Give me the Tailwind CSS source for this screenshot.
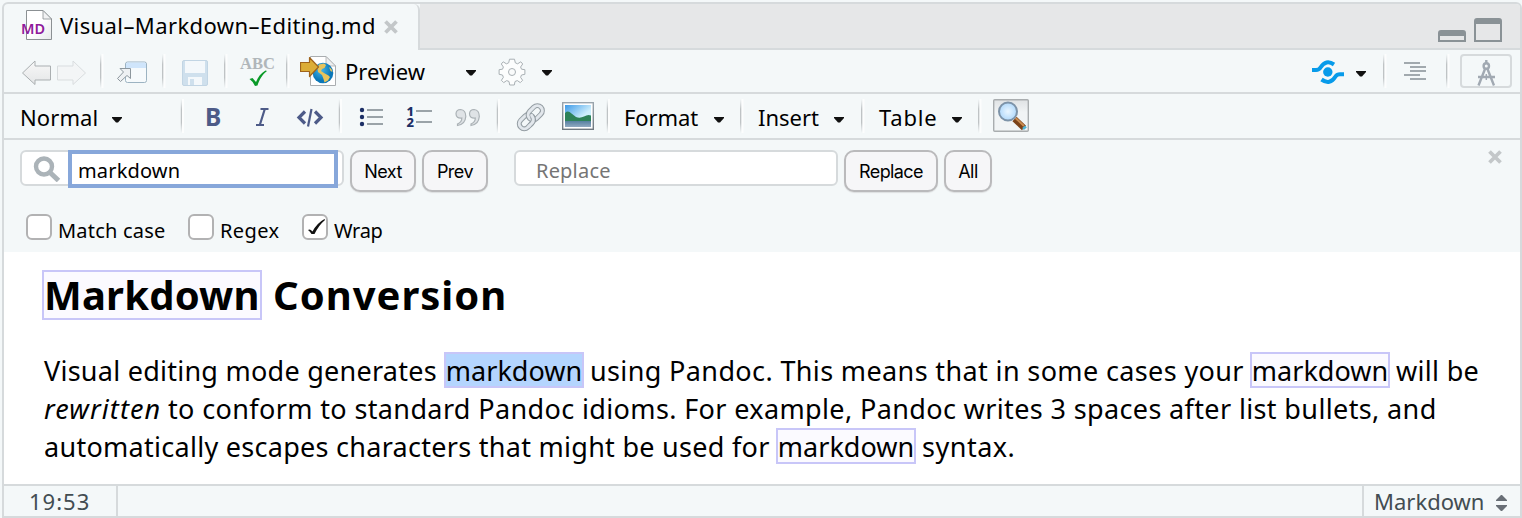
<!DOCTYPE html>
<html lang="en">
<head>
<meta charset="utf-8">
<title>Visual-Markdown-Editing.md</title>
<script src="https://cdn.jsdelivr.net/npm/@tailwindcss/browser@4"></script>
</head>
<body class="w-[1522px] h-[518px] overflow-hidden bg-[#f4f8f9] pt-0.5 pl-0.5 font-['Noto_Sans',sans-serif] text-black">
<svg class="absolute w-0 h-0">
  <defs>
    <linearGradient id="sepg" x1="0" y1="0" x2="0" y2="1"><stop offset="0" stop-color="#c4c8ca" stop-opacity="0"/><stop offset=".3" stop-color="#bfc3c5"/><stop offset=".7" stop-color="#bfc3c5"/><stop offset="1" stop-color="#c4c8ca" stop-opacity="0"/></linearGradient>
    <symbol id="sep" viewBox="0 0 4 34"><rect width="1.500" height="34" fill="url(#sepg)"/><rect x="1.500" width="2" height="34" fill="#fff" opacity=".7"/></symbol>
    <symbol id="caret" viewBox="0 0 10 6"><path d="M0 0H10V1L6 5.400H4L0 1Z" fill="#111"/></symbol>
    <symbol id="x" viewBox="0 0 14 14"><path d="M1.500 1.500L12.500 12.500M12.500 1.500L1.500 12.500" stroke="#c3c7c9" stroke-width="3.800"/></symbol>
  </defs>
</svg>
<div class="w-[1520px] h-[516px] flex flex-col border-2 border-[#d6dadc] rounded-t-md">
  <!-- tab strip -->
  <div class="h-[46px] flex shrink-0">
    <div class="w-[416px] h-[46px] flex shrink-0 border-r-2 border-[#d6dadc] rounded-tr-md">
      <svg class="ml-[17px] w-[32px] h-[46px] shrink-0" viewBox="21 4 32 46">
        <defs><linearGradient id="pg" x1="0" y1="0" x2="1" y2="1"><stop offset=".5" stop-color="#fff"/><stop offset="1" stop-color="#e6e9ea"/></linearGradient></defs>
        <path d="M26.500 10.500H43L51.500 19V39.500H26.500Z" fill="url(#pg)" stroke="#8b9093"/><path d="M43 10.500V19H51.500Z" fill="#f1f2f3" stroke="#8b9093" stroke-width=".8"/>
        <text x="21" y="34" font-family="Noto Sans" font-size="15" font-weight="600" fill="#8f1a9b" textLength="24" lengthAdjust="spacingAndGlyphs">MD</text>
      </svg>
      <div class="ml-[7px] w-[316px] text-[22px] leading-[42px] whitespace-nowrap tracking-[0.4px]">Visual–Markdown–Editing.md</div>
      <svg class="ml-[8px] mt-[16px] w-[14px] h-[14px] shrink-0"><use href="#x"/></svg>
    </div>
    <div class="flex-1 bg-[#e6e7e8] border-b-2 border-[#d6dadc] flex justify-end rounded-tr-sm">
      <svg class="w-[66px] h-[44px] mr-[16px]" viewBox="1438 4 66 44"><g fill="#8a9296"><path fill-rule="evenodd" d="M1438 42V33Q1438 30 1441 30H1463Q1466 30 1466 33V42ZM1440 36V40H1464V36Z"/><path fill-rule="evenodd" d="M1474 42V21Q1474 18 1477 18H1499Q1502 18 1502 21V42ZM1476 24V40H1500V24Z"/></g></svg>
    </div>
  </div>
  <!-- document toolbar -->
  <div class="h-[44px] flex shrink-0 border-b-2 border-[#d6dadc]">
    <svg class="ml-[16px] w-[280px] h-[42px] shrink-0" viewBox="20 50 280 42">
      <defs><linearGradient id="arr" x1="0" y1="0" x2="0" y2="1"><stop offset="0" stop-color="#f8f8f8"/><stop offset="1" stop-color="#e4e6e7"/></linearGradient></defs>
      <path d="M22.500 73L35 61V66H50.500V80H35V84.500Z" fill="url(#arr)" stroke="#aaafb1" stroke-linejoin="round"/>
      <path d="M85.500 73L73 61V66H57.500V80H73V84.500Z" fill="#f3f5f6" stroke="#d9dddf" stroke-linejoin="round"/>
      <use href="#sep" x="100" y="54" width="4" height="34"/><use href="#sep" x="162" y="54" width="4" height="34"/><use href="#sep" x="224" y="54" width="4" height="34"/><use href="#sep" x="286" y="54" width="4" height="34"/>
      <rect x="125.500" y="62" width="21" height="20.500" rx="2" fill="#f6fafc" stroke="#9cb3c2"/><path d="M126 68V64Q126 62.500 127.500 62.500H144.500Q146 62.500 146 64V68Z" fill="#cfe5fb"/>
      <path d="M120 68.500H130.500V78.500L127 75.500L120.500 81.500L117.500 78.500L123.500 72Z" fill="#eef1f3" stroke="#8d979e" stroke-linejoin="round"/>
      <rect x="182.500" y="60.500" width="25" height="25" rx="1.500" fill="#cfe0ed" stroke="#c2d5e4"/><path d="M185 61H205V73H185ZM188 77H202V85H188Z" fill="#f4f8fb"/><rect x="190" y="79" width="4" height="6" fill="#cfe0ed"/>
      <text x="240" y="69" font-family="Liberation Serif" font-size="17" font-weight="700" fill="#b0b6ba" textLength="35" lengthAdjust="spacingAndGlyphs">ABC</text>
      <path d="M249.500 79L252.500 78L256 82C258 77 261 73 265.500 70.500L267 71C262 75 259.500 79.500 257.500 85.500L255 86Q252.500 81 249.500 79Z" fill="#0a9a28"/>
    </svg>
    <svg class="w-[37px] h-[42px] shrink-0" viewBox="300 50 37 42">
      <defs><radialGradient id="gl" cx=".4" cy=".35"><stop offset="0" stop-color="#45b8ea"/><stop offset="1" stop-color="#0b77b8"/></radialGradient></defs>
      <path d="M310.500 56.500H326L335.500 66V85.500H310.500Z" fill="#fff" stroke="#a9adb0"/><path d="M326 56.500V66H335.500Z" fill="#eee" stroke="#a9adb0" stroke-width=".8"/>
      <circle cx="323" cy="73" r="10.300" fill="url(#gl)"/><path d="M319 64.500L324 63.500L326 65L324.500 68L322 69L321 71L324 73L328.500 75.500L330 77L328 80.500L324.500 82.500L323.500 79L322 75L318 72L317.500 68ZM329 67L331.500 69L332.500 72L330.500 71Z" fill="#e8c35b"/>
      <path d="M300.500 62.500H309.500V57.500L318.500 67L309.500 76.500V71.500H300.500Z" fill="#dcad37" stroke="#a0641c" stroke-width="1.200" stroke-linejoin="round"/>
    </svg>
    <div class="ml-[8px] w-[121px] text-[22px] leading-[42px] whitespace-nowrap">Preview</div>
    <svg class="w-[10px] h-[6px] mt-[20px] shrink-0"><use href="#caret"/></svg>
    <svg class="ml-[22px] mt-[8px] w-[28px] h-[28px] shrink-0" viewBox="-14 -14 28 28">
      <path fill="#fcfdfd" stroke="#a9b0b4" stroke-linejoin="round" d="M-2.500-12.800H2.500L3.300-9.200L5.600-8.200L8.800-10.200L10.700-8L8.600-5L9.500-2.800L12.900-2.300V2.300L9.500 3L8.600 5.300L10.600 8.300L8.300 10.600L5.300 8.600L3 9.500L2.300 13H-2.300L-3 9.500L-5.300 8.600L-8.300 10.600L-10.600 8.300L-8.600 5.300L-9.500 3L-12.900 2.300V-2.300L-9.500-2.800L-8.600-5L-10.700-8L-8.800-10.200L-5.600-8.200L-3.300-9.200Z"/><circle r="3.500" fill="#fafbfb" stroke="#a9b0b4"/>
    </svg>
    <svg class="ml-[16px] w-[10px] h-[6px] mt-[20px] shrink-0"><use href="#caret"/></svg>
    <svg class="ml-auto w-[142px] h-[42px] shrink-0" viewBox="1312 50 142 42">
      <g fill="none" stroke="#079bea" stroke-width="4"><path d="M1312 70H1316Q1319 70 1320.500 67.500Q1326 59 1334 64.500"/><path d="M1344 74.200H1340Q1337 74.200 1335.500 76.500Q1330 85.500 1321.500 79.500"/></g><circle cx="1327.800" cy="72" r="4.700" fill="#079bea"/>
      <use href="#caret" x="1356" y="71" width="10" height="6"/>
      <use href="#sep" x="1383" y="54" width="4" height="34"/><use href="#sep" x="1446" y="54" width="4" height="34"/>
      <path d="M1404 63H1420M1410 67H1426M1410 71H1426M1404 75H1420M1410 79H1426" stroke="#a1a9ae" stroke-width="2"/>
    </svg>
    <div class="ml-[6px] mr-[8px] mt-[4px] w-[52px] h-[34px] border-2 border-[#d6dadc] rounded flex justify-center shrink-0">
      <svg class="w-[18px] h-[30px]" viewBox="1477 56 18 30"><g fill="none" stroke="#a1a9b2" stroke-width="2.400"><path d="M1486.300 60V63M1485 69L1478.500 85.500M1487.500 69L1494 85.500M1478 77H1495" /><path d="M1486.300 74V80" stroke-width="1.500"/><circle cx="1486.300" cy="66" r="2.700"/></g></svg>
    </div>
  </div>
  <!-- formatting toolbar -->
  <div class="h-[46px] flex shrink-0 border-b-2 border-[#d6dadc] text-[22px] leading-[44px] whitespace-nowrap">
    <div class="ml-[16px] pt-px w-[92px] tracking-[0.1px]">Normal</div>
    <svg class="w-[10px] h-[6px] mt-[23px] shrink-0"><use href="#caret"/></svg>
    <svg class="ml-[58px] w-[440px] h-[44px] shrink-0" viewBox="180 94 440 44">
      <defs><linearGradient id="sky" x1="0" y1="0" x2="1" y2="1"><stop offset="0" stop-color="#3d9ae8"/><stop offset=".6" stop-color="#cdeefc"/></linearGradient><linearGradient id="frm" x1="0" y1="0" x2="0" y2="1"><stop offset="0" stop-color="#9ba5ad"/><stop offset="1" stop-color="#6f7880"/></linearGradient><linearGradient id="sea" x1="0" y1="0" x2="0" y2="1"><stop offset="0" stop-color="#5580a0"/><stop offset="1" stop-color="#91a9c1"/></linearGradient></defs>
      <use href="#sep" x="180.500" y="99" width="4" height="34"/><use href="#sep" x="338.500" y="99" width="4" height="34"/><use href="#sep" x="496.500" y="99" width="4" height="34"/><use href="#sep" x="606.500" y="99" width="4" height="34"/>
      <text x="205" y="126" font-family="Noto Sans" font-size="24.500" font-weight="700" fill="#4d5b88">B</text>
      <path d="M260.500 109H268.500M256 125H264M264.800 109L259.800 125" stroke="#4d5b88" stroke-width="2.200" fill="none"/>
      <path d="M305 111.500L299 117.500L305 123.500M315 111.500L321 117.500L315 123.500" stroke="#4d5b88" stroke-width="3.200" fill="none"/><path d="M311.500 109L308 126.500" stroke="#4d5b88" stroke-width="2.200"/>
      <g fill="#1c2f66"><circle cx="362" cy="110" r="2.200"/><circle cx="362" cy="117" r="2.200"/><circle cx="362" cy="124" r="2.200"/></g><path d="M367 110H383M367 117H383M367 124H383M416 111H432M416 122H432" stroke="#9aa3a8" stroke-width="2"/>
      <text x="406.500" y="116" font-family="Noto Sans" font-size="13" font-weight="800" fill="#1c2f66">1</text><text x="406.500" y="127" font-family="Noto Sans" font-size="13" font-weight="800" fill="#1c2f66">2</text>
      <g fill="#dfe3e6" stroke="#abb2b6" stroke-width="1.200"><path id="qm" d="M457.500 125.500V124Q462 122 461.800 118Q456 118.500 456 113.800Q456.200 109.500 460.600 109.500Q465.800 110 465.800 116.500Q465.200 124.500 457.500 125.500Z"/><use href="#qm" x="13.500"/></g>
      <g fill="none" transform="rotate(-45 531 117)" stroke-linecap="round"><rect x="516.500" y="112" width="16" height="10" rx="5" stroke="#949da3" stroke-width="5"/><rect x="516.500" y="112" width="16" height="10" rx="5" stroke="#e2e7ec" stroke-width="3"/><rect x="529" y="112" width="16" height="10" rx="5" stroke="#949da3" stroke-width="5"/><rect x="529" y="112" width="16" height="10" rx="5" stroke="#e2e7ec" stroke-width="3"/><path d="M524 122H527.500Q532 121.500 532.500 117" stroke="#949da3" stroke-width="5" stroke-linecap="butt"/><path d="M523.500 122H527.500Q532 121.500 532.500 116.500" stroke="#e2e7ec" stroke-width="3"/></g>
      <rect x="562.700" y="102.700" width="30.600" height="26.600" fill="#fff" stroke="url(#frm)" stroke-width="1.400"/><rect x="565" y="105" width="26" height="22" fill="url(#sky)"/><path d="M565 113Q568 110 571.500 113.500L576 117Q580 118.500 584 116.500Q588 114 591 115.500V122H565Z" fill="#2d8259"/><path d="M565 121H591V127H565Z" fill="url(#sea)"/>
    </svg>
    <div class="ml-[4px] pt-px w-[90px] tracking-[-0.1px]">Format</div>
    <svg class="w-[10px] h-[6px] mt-[23px] shrink-0"><use href="#caret"/></svg>
    <svg class="ml-[16px] mt-[5px] w-[4px] h-[34px] shrink-0"><use href="#sep"/></svg>
    <div class="ml-[14px] pt-px w-[76px]">Insert</div>
    <svg class="w-[10px] h-[6px] mt-[23px] shrink-0"><use href="#caret"/></svg>
    <svg class="ml-[17px] mt-[5px] w-[4px] h-[34px] shrink-0"><use href="#sep"/></svg>
    <div class="ml-[14px] pt-px w-[73px] tracking-[0.8px]">Table</div>
    <svg class="w-[10px] h-[6px] mt-[23px] shrink-0"><use href="#caret"/></svg>
    <svg class="ml-[16px] mt-[5px] w-[4px] h-[34px] shrink-0"><use href="#sep"/></svg>
    <svg class="ml-[11px] w-[36px] h-[44px] shrink-0" viewBox="993 94 36 44">
      <defs><linearGradient id="fb" x1="0" y1="0" x2="0" y2="1"><stop offset="0" stop-color="#dfe2e4"/><stop offset=".4" stop-color="#f1f4f5"/></linearGradient><radialGradient id="lens"><stop offset="0" stop-color="#eaf6ff"/><stop offset="1" stop-color="#b1d9fb"/></radialGradient></defs>
      <rect x="993.700" y="99.700" width="34.600" height="31.600" rx="1" fill="url(#fb)" stroke="#a9adaf" stroke-width="1.400"/>
      <path d="M1014.500 119L1024 128" stroke="#7b4218" stroke-width="6"/><path d="M1015.500 118L1024 126" stroke="#c98b50" stroke-width="2"/><path d="M1023 129L1026 126.500" stroke="#4fb3d6" stroke-width="2.500"/>
      <circle cx="1008" cy="111.500" r="9" fill="url(#lens)" stroke="#7d93a8" stroke-width="2"/>
    </svg>
  </div>
  <!-- find bar -->
  <div class="h-[112px] shrink-0 flex flex-col pt-[10px]">
    <div class="flex items-start h-[42px] pl-[16px] text-[20px] leading-[38px] whitespace-nowrap">
      <div class="w-[324px] h-[36px] bg-white border-2 border-[#d6dadc] rounded-md flex shrink-0">
        <svg class="ml-[11px] mt-[4px] w-[28px] h-[26px] shrink-0" viewBox="33 155 28 26"><circle cx="44" cy="165.500" r="8" fill="none" stroke="#abb3b8" stroke-width="4.400"/><path d="M49.500 171L58.500 179.500" stroke="#abb3b8" stroke-width="5"/></svg>
        <div class="ml-[7px] -mt-[2px] w-[270px] h-[38px] bg-white border-4 border-[#87a7da] pl-[6px] pt-[2px] leading-[30px] tracking-[0.15px] shrink-0">markdown</div>
      </div>
      <button class="ml-[6px] w-[66px] h-[42px] border-2 border-[#bababc] rounded-[10px] bg-[#f6f6f8] shadow-[0_1px_1px_#dddfe0] font-[Inter] text-[18px] tracking-[-0.5px] pt-px">Next</button>
      <button class="ml-[6px] w-[66px] h-[42px] border-2 border-[#bababc] rounded-[10px] bg-[#f6f6f8] shadow-[0_1px_1px_#dddfe0] font-[Inter] text-[18px] tracking-[-0.5px] pt-px">Prev</button>
      <div class="ml-[26px] w-[324px] h-[36px] bg-white border-2 border-[#d6dadc] rounded-md pl-[20px] pt-[2px] leading-[34px] text-[#757575] tracking-[0.2px]">Replace</div>
      <button class="ml-[6px] w-[94px] h-[42px] border-2 border-[#bababc] rounded-[10px] bg-[#f6f6f8] shadow-[0_1px_1px_#dddfe0] font-[Inter] text-[18px] tracking-[-0.6px] pt-px">Replace</button>
      <button class="ml-[6px] w-[48px] h-[42px] border-2 border-[#bababc] rounded-[10px] bg-[#f6f6f8] shadow-[0_1px_1px_#dddfe0] font-[Inter] text-[18px] tracking-[-0.5px] pt-px">All</button>
      <svg class="ml-auto mr-[18px] w-[14px] h-[14px]"><use href="#x"/></svg>
    </div>
    <div class="flex mt-[22px] pl-[22px] text-[20px] leading-[34px] whitespace-nowrap">
      <div class="w-[26px] h-[26px] bg-white border-2 border-[#b2b2b3] rounded-md shrink-0"></div>
      <div class="ml-[6px] w-[130px] tracking-[0.2px]">Match case</div>
      <div class="w-[26px] h-[26px] bg-white border-2 border-[#b2b2b3] rounded-md shrink-0"></div>
      <div class="ml-[6px] w-[82px] tracking-[0.4px]">Regex</div>
      <div class="w-[26px] h-[26px] bg-white border-2 border-[#b2b2b3] rounded-md shrink-0"><svg class="w-[22px] h-[22px]" viewBox="304 216 22 22"><path d="M308 230Q310 228.500 312.500 231.500Q317 223 324.500 219L325 220Q319 225 314.500 234H311.500Q310 231.500 308 230Z" fill="#111"/></svg></div>
      <div class="ml-[6px] tracking-[-0.3px]">Wrap</div>
    </div>
  </div>
  <!-- document -->
  <div class="h-[232px] shrink-0 bg-white pl-[40px] whitespace-nowrap">
    <h1 class="pt-[18px] h-[70px] text-[40px] leading-[50px] font-bold flex"><span class="block h-[50px] -ml-[2px] w-[220px] pl-[2px] tracking-[0.2px] outline-2 -outline-offset-2 outline-[#c8c6f8] bg-[#fbfaff]">Markdown</span><span class="ml-[11px] tracking-[1px]">Conversion</span></h1>
    <div class="mt-[30px] text-[27px] leading-[38px]">
      <div class="h-[38px] flex"><span class="w-[400px] tracking-[0.25px]">Visual editing mode generates</span><span class="h-[36px] w-[140px] text-center bg-[#b4d5fe] outline-2 -outline-offset-2 outline-[#c8c6f8]">markdown</span><span class="ml-[6px] w-[660px] tracking-[0.37px]">using Pandoc. This means that in some cases your</span><span class="h-[36px] w-[140px] text-center bg-[#fbfaff] outline-2 -outline-offset-2 outline-[#c8c6f8]">markdown</span><span class="ml-[6px] tracking-[0.3px]">will be</span></div>
      <div class="h-[38px] flex"><em class="w-[124px] tracking-[1.1px]">rewritten</em><span class="tracking-[0.37px]">to conform to standard Pandoc idioms. For example, Pandoc writes 3 spaces after list bullets, and</span></div>
      <div class="h-[38px] flex"><span class="w-[732px] tracking-[0.28px]">automatically escapes characters that might be used for</span><span class="h-[36px] w-[140px] text-center bg-[#fbfaff] outline-2 -outline-offset-2 outline-[#c8c6f8]">markdown</span><span class="ml-[6px] tracking-[0.5px]">syntax.</span></div>
    </div>
  </div>
  <!-- status bar -->
  <div class="h-[32px] shrink-0 border-t-2 border-[#d6dadc] flex text-[22px] leading-[31px] text-[#434d52] whitespace-nowrap">
    <div class="w-[114px] border-r-2 border-[#d6dadc] pl-[25px] tracking-[1px]">19:53</div>
    <div class="ml-auto w-[158px] border-l-2 border-[#d6dadc] flex pl-[10px]"><span class="w-[122px]">Markdown</span>
      <svg class="w-[12px] h-[16px] mt-[9px]" viewBox="0 0 12 16"><path d="M5 0H6L11 5V6H0V5ZM0 10H11V11L6 16H5L0 11Z" fill="#696f76"/></svg></div>
  </div>
</div>
</body>
</html>
